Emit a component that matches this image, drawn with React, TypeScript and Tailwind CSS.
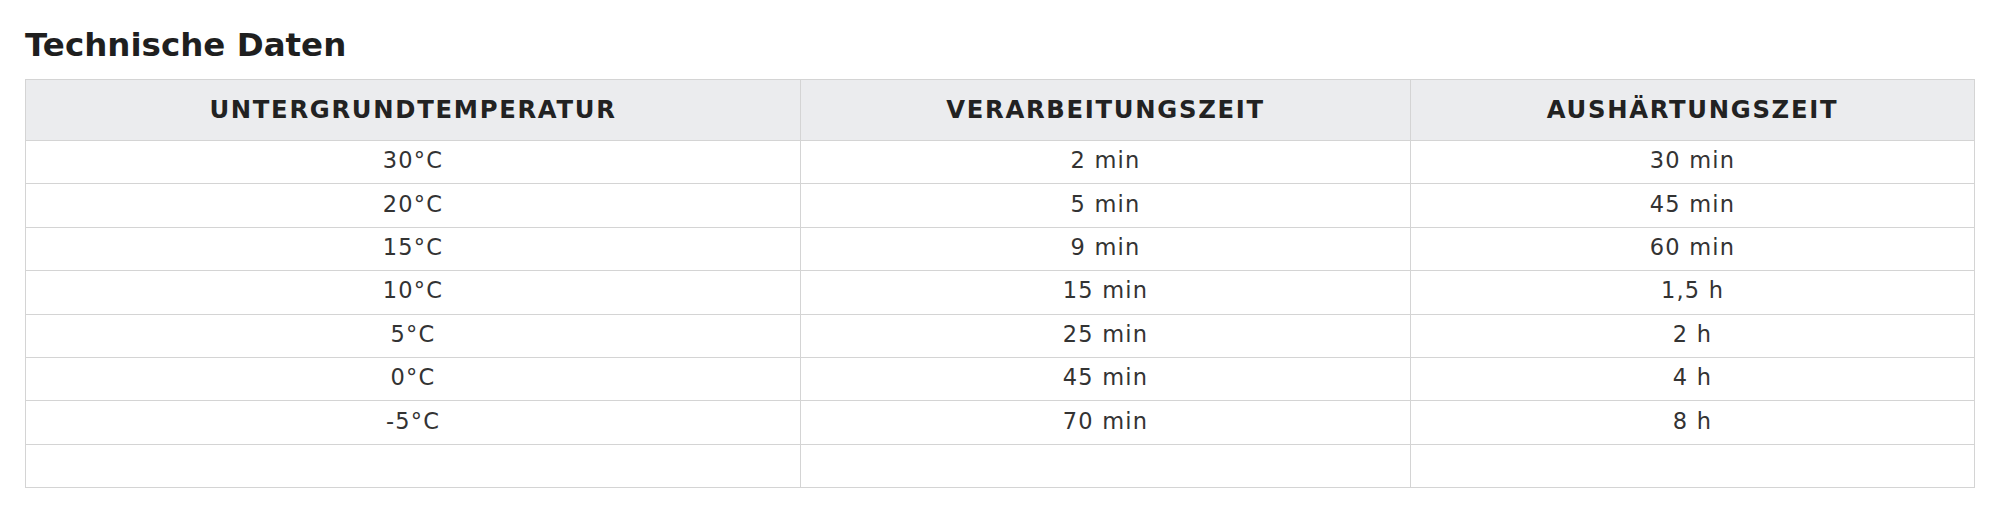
import React from "react";

const rows: [string, string, string][] = [
  ["30°C", "2 min", "30 min"],
  ["20°C", "5 min", "45 min"],
  ["15°C", "9 min", "60 min"],
  ["10°C", "15 min", "1,5 h"],
  ["5°C", "25 min", "2 h"],
  ["0°C", "45 min", "4 h"],
  ["-5°C", "70 min", "8 h"],
  ["", "", ""],
];

export default function App() {
  return (
    <div className="w-[2000px] h-[512px] bg-white px-[25px] pt-[26px] font-['DejaVu_Sans',sans-serif]">
      <h2 className="text-[32.5px] leading-[39px] font-bold text-[#1f1f1f] m-0">Technische Daten</h2>
      <table className="mt-[14px] w-full table-fixed border-collapse">
        <colgroup>
          <col className="w-[775px]" />
          <col className="w-[610px]" />
          <col />
        </colgroup>
        <thead>
          <tr className="h-[61px] bg-[#ebecee]">
            {["UNTERGRUNDTEMPERATUR", "VERARBEITUNGSZEIT", "AUSHÄRTUNGSZEIT"].map((h) => (
              <th
                key={h}
                className="border border-[#d4d4d4] text-center align-middle text-[24.3px] font-bold tracking-[1.7px] text-[#222] p-0"
              >
                {h}
              </th>
            ))}
          </tr>
        </thead>
        <tbody>
          {rows.map((r, i) => (
            <tr key={i} className="h-[43.4px]">
              {r.map((c, j) => (
                <td
                  key={j}
                  className="border border-[#d4d4d4] text-center align-middle text-[22.5px] tracking-[1.2px] text-[#333] p-0 pb-[2px]"
                >
                  {c}
                </td>
              ))}
            </tr>
          ))}
        </tbody>
      </table>
    </div>
  );
}
